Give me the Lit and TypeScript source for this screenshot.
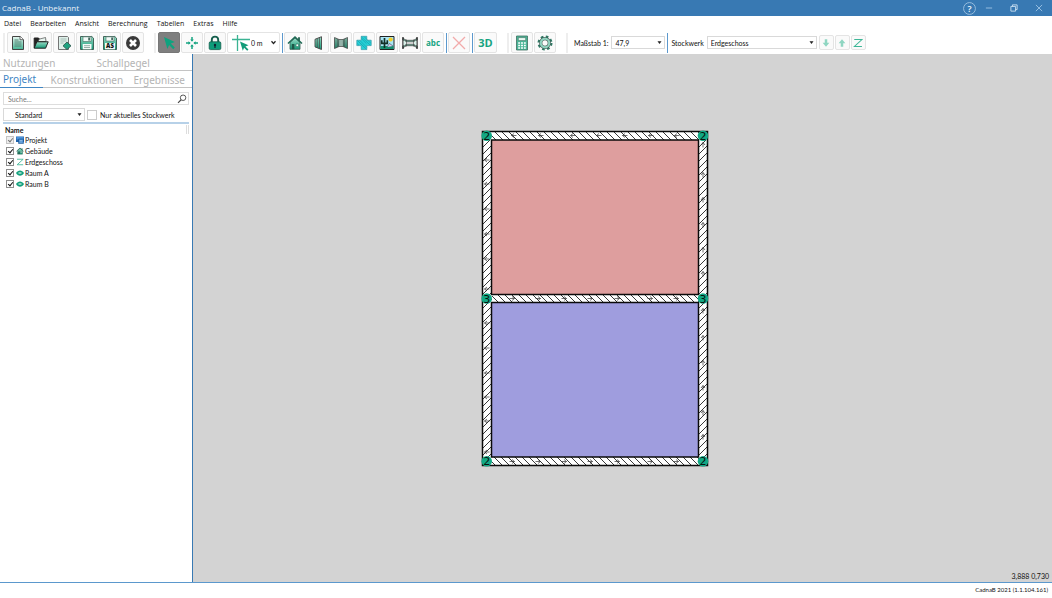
import { LitElement, html, css, svg, nothing } from "lit";
import { customElement, property, state } from "lit/decorators.js";
import { classMap } from "lit/directives/class-map.js";

const defs = svg`
  <linearGradient id="g" x1="0" y1="0" x2="0" y2="1">
    <stop offset="0" stop-color="#e6f7f1"></stop><stop offset="1" stop-color="#45b594"></stop>
  </linearGradient>
  <linearGradient id="d" x1="0" y1="0" x2="0" y2="1">
    <stop offset="0" stop-color="#9adcc6"></stop><stop offset="1" stop-color="#169a78"></stop>
  </linearGradient>`;

const icons: Record<string, unknown> = {
  file: svg`<path d="M2.5 1.5h7.7l3.3 3.2v9.8h-11z" fill="url(#g)" stroke="#444"/><path d="M10 1.5v3.2h3.4" fill="#fff" stroke="#444" stroke-width=".8"/><path d="M4.5 5h4M4.5 7h7M4.5 9h7M4.5 11h7" stroke="#4c7a6c" stroke-width=".9"/>`,
  open: svg`<path d="M1.2 13V3h4.3l1.2 1.5h5.6V7" fill="#222" stroke="#222"/><path d="M6 4.2 12.5 2.5l.6 4H5z" fill="#e8f5f0" stroke="#333" stroke-width=".6"/><path d="M1.2 13.2 3.8 6.8h11.4l-2.6 6.4z" fill="url(#d)" stroke="#222"/>`,
  fileDb: svg`<path d="M2.5 1.5h9l1 1v12h-10z" fill="#dff0ea" stroke="#666" stroke-width=".9"/><path d="M4.5 4h6M4.5 6h6M4.5 8h3" stroke="#8aa89e" stroke-width=".7"/><path d="M11 7l4 3.8-4 3.8-4-3.8z" fill="#1ea380" stroke="#2b4f45" stroke-width=".8"/>`,
  save: svg`<path d="M1.5 1.5h11.3l1.7 1.7v11.3h-13z" fill="url(#d)" stroke="#33584d" stroke-width=".9"/><path d="M4 1.8h8v4.7H4z" fill="#f2fbf8" stroke="#476b60" stroke-width=".6"/><path d="M9.3 2.5h1.6v3H9.3z" fill="#33584d"/><path d="M3.7 9h8.8v5.3H3.7z" fill="#f4faf8"/><path d="M5 10.7h6M5 12.5h6" stroke="#6b8f84" stroke-width=".7"/>`,
  saveAs: svg`<path d="M1.5 1.5h11.3l1.7 1.7v11.3h-13z" fill="url(#d)" stroke="#33584d" stroke-width=".9"/><path d="M4 1.8h8v4.2H4z" fill="#f2fbf8" stroke="#476b60" stroke-width=".6"/><path d="M9.3 2.5h1.6v2.6H9.3z" fill="#33584d"/><path d="M3 8h10v6.3H3z" fill="#f4faf8"/><text x="8" y="13.4" text-anchor="middle" font-size="6" font-weight="800" fill="#111">AS</text>`,
  close: svg`<circle cx="8" cy="8" r="7" fill="#3a3a3a"/><path d="m5 5 6 6m0-6-6 6" stroke="#fff" stroke-width="2.6"/><circle cx="8" cy="8" r="1" fill="#fff"/>`,
  cursor: svg`<path d="m3 2 10.8 4.9-4 1.6 4 4-1.6 1.7-4.1-4.1-1.7 4z" fill="#0fa37f"/>`,
  cross: svg`<path d="M8 2v3.8M8 10.2V14M2 8h3.8M10.2 8H14" stroke="#16a481" stroke-width="1.5"/><path d="M6.2 4.4h3.6L8 6.7zM6.2 11.6h3.6L8 9.3zM4.4 6.2v3.6L6.7 8zM11.6 6.2v3.6L9.3 8z" fill="#16a481"/>`,
  lock: svg`<path d="M4.8 7.2V4.8a3.2 3.2 0 0 1 6.4 0v2.4" fill="none" stroke="#145e4c" stroke-width="1.9"/><rect x="2.2" y="6.8" width="11.6" height="7.8" rx="1.3" fill="#0f9b79" stroke="#145e4c" stroke-width=".8"/><circle cx="8" cy="10" r="1.2" fill="#123"/><path d="M8 10v3" stroke="#123" stroke-width="1.2"/>`,
  house: svg`<path d="M11 2.3h2v4h-2z" fill="#36705f"/><path d="M3 7.5 8 3l5 4.5v6.8H3z" fill="url(#d)" stroke="#345c50" stroke-width=".8"/><path d="m1 8.5 7-6.5 7 6.5" fill="none" stroke="#1f6a55" stroke-width="1.6"/><path d="M4.8 9h2.6v5.2H4.8z" fill="#1d5747"/><path d="M9 9h2.6v2.6H9z" fill="#fff" stroke="#287a63" stroke-width=".7"/>`,
  wall: svg`<path d="m5 4.3 6.5-2.6v12.8L5 11.9z" fill="url(#d)" stroke="#444" stroke-width=".9"/><path d="M7.2 3.5v9.4M9.4 2.7v11" stroke="#444" stroke-width=".8"/>`,
  walls: svg`<path d="m1.5 2.5 4.5 2v7l-4.5 2zM14.5 2.5l-4.5 2v7l4.5 2z" fill="url(#d)" stroke="#444" stroke-width=".8"/><path d="M6 4.5h4v7H6z" fill="#b8e3d6" stroke="#444" stroke-width=".7"/><path d="M3 3.2v9.6M4.5 4v8M8 4.5v7M11.5 4v8M13 3.2v9.6" stroke="#444" stroke-width=".6"/>`,
  plus: svg`<path d="M5.2 1.3h5.6v3.9h4.4v5.4h-4.4v4H5.2v-4H.8V5.2h4.4z" fill="#27d0d6" stroke="#379aa8" stroke-width=".7"/><path d="m5.3 3.5 5.2 5.2m-9-3.2 3.8 3.8 5.2 5M3.8 5.4l7 7M5.3 1.8l9 8.4M8.3 1.8l6.4 6.4M1.2 8.5l1.8 1.8" stroke="#109ba8" stroke-width=".6"/>`,
  picture: svg`<path d="M1 1.5h14v13H1z" fill="#a9e6f5" stroke="#222"/><path d="M1.5 11h13v3H1.5z" fill="#158f70"/><circle cx="11.6" cy="4.5" r="2.1" fill="#f5cf22"/><path d="M5.5 13V3M2.8 5.3v3h5.5v-3" fill="none" stroke="#132f27" stroke-width="1.7"/><path d="m8 12 2.5-3.5L14 11" fill="#dce" stroke="#345" stroke-width=".6"/>`,
  room: svg`<path d="M.8 3 4 5.3h8L15.2 3v2L12 6.8H4L.8 5zM.8 13 4 10.7h8l3.2 2.3v-2L12 9.2H4L.8 11z" fill="#7fcdb5" stroke="#333" stroke-width=".7"/><path d="M1 2v12M15 2v12" stroke="#333" stroke-width="1.4"/><path d="M4 4.5v7M12 4.5v7" stroke="#333"/><path d="M1.6 5.5 4 6.8v2.4l-2.4 1.3zM14.4 5.5 12 6.8v2.4l2.4 1.3z" fill="#d8f1e9"/>`,
  del: svg`<path d="m2 2 12 12M14 2 2 14" stroke="#f2aaaa" stroke-width="1.3"/>`,
  calc: svg`<path d="M2.5 1h11v14h-11z" fill="#4bb798" stroke="#3c6f60" stroke-width=".8"/><path d="M4.3 2.6h7.4v3H4.3z" fill="#e8f8f2" stroke="#3c6f60" stroke-width=".6"/><path d="M4.2 7.9h7.6M4.2 10.4h7.6M4.2 12.9h7.6" stroke="#fff" stroke-width="1.5" stroke-dasharray="1.9 .95"/>`,
  gear: svg`<circle cx="8" cy="8" r="6.3" fill="none" stroke="#2f7864" stroke-width="2.4" stroke-dasharray="2.6 2.35"/><circle cx="8" cy="8" r="4.3" fill="none" stroke="#3c4f4a" stroke-width="3.2"/><circle cx="8" cy="8" r="4.3" fill="none" stroke="#8fd3bf" stroke-width="2.2"/>`,
  down: svg`<path d="M6 2h4v5.5h3.4L8 14 2.600 7.500H6z" fill="#8fd6c2"/>`,
  up: svg`<path d="M6 14h4V8.500h3.400L8 2 2.600 8.500H6z" fill="#8fd6c2"/>`,
  level: svg`<path d="M2 2.500h12.300L2.300 13.500h12" fill="none" stroke="#3db696" stroke-width="1.700"/>`,
  search: svg`<circle cx="9.700" cy="6" r="4.400" fill="none" stroke="#444" stroke-width="1.400"/><path d="m6.600 9.200-5 5" stroke="#444" stroke-width="1.700"/>`,
  project: svg`<path d="M0 1h16v11H0z" fill="#1d63ae"/><path d="M1 2h14v5H1z" fill="#4b93da"/><path d="M5 6h10v9H5z" fill="#3f86cc" stroke="#164a84"/><path d="M7 9h6M7 12h6" stroke="#dcebf9"/>`,
  roomDot: svg`<path d="M0 8c4-7 12-7 16 0-4 7-12 7-16 0z" fill="#12a07c"/><path d="M5 8h6" stroke="#d9f4ec" stroke-width="2.400"/>`,
  help: svg`<circle cx="8" cy="8" r="7.300" fill="none" stroke="#aacae6"/><text x="8" y="12" text-anchor="middle" font-size="11" font-weight="600" fill="#fff">?</text>`,
  min: svg`<path d="M3 8h10" stroke="#a9cbea" stroke-width="1.300"/>`,
  restore: svg`<path d="M3 5.500h7.500V13H3zM5.500 5.500V3H13v7.500h-2.500" fill="none" stroke="#cfe2f3" stroke-width="1.400"/>`,
  exit: svg`<path d="m3 3 10 10M13 3 3 13" stroke="#a9cbea" stroke-width="1.300"/>`,
};

@customElement("app-icon")
class AppIcon extends LitElement {
  static styles = css`
    :host { display: inline-flex; flex: none; width: 16px; height: 16px; }
    svg { width: 100%; height: 100%; display: block; font-family: "Open Sans", sans-serif; }
  `;
  @property() name = "";
  render() {
    return html`<svg viewBox="0 0 16 16" aria-hidden="true"><defs>${defs}</defs>${icons[this.name] ?? nothing}</svg>`;
  }
}

type Wall = { x: number; y: number; w: number; h: number; marks: number[]; dir: string };

const walls: Wall[] = [
  { x: 2, y: 2, w: 226, h: 9, dir: "l", marks: [34, 61, 93, 119, 145, 171, 197] },
  { x: 2, y: 328, w: 226, h: 9, dir: "r", marks: [32, 58, 84, 110, 137, 170, 196] },
  { x: 2, y: 11, w: 10, h: 317, dir: "l", marks: [31, 55, 80, 105, 130, 160, 194, 219, 244, 268, 292, 323] },
  { x: 218, y: 11, w: 10, h: 317, dir: "u", marks: [16, 46, 71, 96, 121, 145, 182, 209, 234, 259, 284, 308] },
  { x: 12, y: 165, w: 206, h: 9, dir: "r", marks: [32, 58, 84, 110, 137, 170, 196] },
];

const turn: Record<string, number> = { r: 0, l: 180, u: 270 };

@customElement("floor-plan")
class FloorPlan extends LitElement {
  static styles = css`
    :host { display: block; }
    svg { display: block; width: 230px; height: 340px; font-family: "DejaVu Sans", sans-serif; }
    .edge { fill: none; stroke: #0a0a0a; stroke-width: 1.5; }
    .hatch { stroke: #222; stroke-width: 0.9; }
    .mark { stroke: #333; stroke-width: 0.7; fill: none; }
    .node { fill: #12a884; }
    .count { font-size: 11px; text-anchor: middle; fill: #06140f; }
  `;
  private wall(w: Wall, i: number) {
    const flat = w.w > w.h;
    const lines = [];
    if (flat) {
      for (let x = w.x - 9; x < w.x + w.w; x += 7) {
        lines.push(svg`<line class="hatch" x1=${x} y1=${w.y} x2=${x + w.h} y2=${w.y + w.h}></line>`);
      }
    } else {
      for (let y = w.y - 9; y < w.y + w.h + 10; y += 7) {
        lines.push(svg`<line class="hatch" x1=${w.x} y1=${y + w.w} x2=${w.x + w.w} y2=${y}></line>`);
      }
    }
    return svg`
      <clipPath id=${"w" + i}><rect x=${w.x} y=${w.y} width=${w.w} height=${w.h}></rect></clipPath>
      <rect x=${w.x} y=${w.y} width=${w.w} height=${w.h} fill="#fff"></rect>
      <g clip-path=${`url(#w${i})`}>${lines}</g>
      ${w.marks.map((m) => {
        const cx = flat ? m : w.x + w.w / 2;
        const cy = flat ? w.y + w.h / 2 : m;
        return svg`<path class="mark" d="M-2.5 0h5M0-2 2.5 0 0 2" transform=${`translate(${cx} ${cy}) rotate(${turn[w.dir]})`}></path>`;
      })}`;
  }
  render() {
    const nodes: [number, number, number][] = [
      [6.7, 6.7, 2], [223, 6.7, 2], [6.7, 169.5, 3], [223, 169.5, 3], [6.7, 332.3, 2], [223, 332.3, 2],
    ];
    return html`<svg viewBox="0 0 230 340" role="img" aria-label="Grundriss Erdgeschoss">
      <rect x="12" y="11" width="206" height="154" fill="#de9e9e"></rect>
      <rect x="12" y="174" width="206" height="154" fill="#9f9dde"></rect>
      ${walls.map((w, i) => this.wall(w, i))}
      <rect class="edge" x="2.5" y="2.5" width="225" height="334"></rect>
      <rect class="edge" x="11.5" y="11" width="207" height="154.5"></rect>
      <rect class="edge" x="11.5" y="173.5" width="207" height="154.5"></rect>
      ${nodes.map(([x, y, n]) => svg`<circle class="node" cx=${x} cy=${y} r="5.300"></circle><text class="count" x=${x} y=${y + 4}>${n}</text>`)}
    </svg>`;
  }
}

@customElement("app-root")
class AppRoot extends LitElement {
  static styles = css`
    :host {
      display: flex; flex-direction: column; height: 100vh; overflow: hidden;
      background: #fff; color: #111; font: 7px/10px Lato, "Open Sans", sans-serif;
    }
    *, *::before, *::after { box-sizing: border-box; }
    button, input, select { font: inherit; color: inherit; margin: 0; padding: 0; }
    button { display: inline-flex; align-items: center; justify-content: center; border: 0; background: none; }
    .titlebar { display: flex; align-items: center; height: 16px; flex: none; background: #3879b3; color: #e8f1f9; padding: 0 7px 0 2px; }
    .title { flex: 1; margin: 0; font: 8px/14px "Open Sans", sans-serif; }
    .window { display: flex; gap: 13px; align-items: center; }
    .window app-icon { width: 10px; height: 10px; }
    .titlebar button { width: 12px; height: 14px; }
    .help { margin-right: 8px; }
    .help app-icon { width: 13px; height: 13px; }
    .menu { display: flex; gap: 9px; height: 15px; flex: none; align-items: center; padding: 0 4px; font-family: "Open Sans", sans-serif; }
    .menu a { color: inherit; text-decoration: none; }
    .tools { display: flex; align-items: center; height: 23px; flex: none; padding-left: 3px; }
    .group { display: flex; align-items: center; gap: 1px; }
    .group + .group { margin-left: 10px; }
    .grip { width: 2px; height: 20px; background: #eee; margin-right: 1px; }
    .rule { width: 1px; height: 20px; background: #5b98cd; margin-left: 1px; }
    .tool { width: 22px; height: 21px; border: 1px solid #e4e4e4; border-radius: 2px; background: #fafafa; }
    .tool.active { background: #7f7f7f; border-color: #777; }
    .tool.word { color: #17a481; font: 700 8px/10px "Open Sans", sans-serif; }
    .tool.word.big { font-size: 11px; width: 23px; }
    .tool.small { width: 15px; height: 15px; }
    .tool.small app-icon { width: 10px; height: 10px; }
    .snap { display: flex; align-items: center; width: 53px; height: 21px; border: 1px solid #e4e4e4; border-radius: 2px; padding-left: 3px; }
    .snap svg { width: 20px; height: 18px; flex: none; }
    .snap .pick { flex: 1; }
    .snap .pick select { border: 0; padding: 0; background: none; }
    .pick { position: relative; display: block; }
    .pick select { appearance: none; width: 100%; height: 13px; border: 1px solid #d9d9d9; border-radius: 0; background: #fff; padding: 0 10px 0 3px; }
    .pick .caret { position: absolute; right: 3px; top: 4px; width: 5px; height: 5px; pointer-events: none; }
    .field { display: flex; align-items: center; gap: 3px; }
    .scales { margin-left: 4px; }
    .scale { width: 54px; }
    .floors { margin: 0 1px 0 2px; }
    .floor { width: 110px; }
    .body { display: grid; grid-template-columns: 193px 1fr; flex: 1; min-height: 0; border-bottom: 1px solid #5b98cd; }
    .side { border-right: 1px solid #3879b3; }
    .tabs { display: flex; height: 17px; border-bottom: 1px solid #c4c4c4; }
    .tabs button { height: 17px; padding: 0 3px; font: 10px/14px "Noto Sans", sans-serif; color: #b4b4b4; }
    .tabs.upper { gap: 35px; }
    .tabs .on { color: #3f86c4; border-bottom: 1px solid #3f86c4; padding-right: 7px; }
    .tabs.lower { justify-content: space-between; padding-right: 4px; }
    .find { display: flex; align-items: center; height: 13px; margin: 4px 3px 3px; border: 1px solid #ddd; padding: 0 1px 0 4px; }
    .find input { flex: 1; min-width: 0; border: 0; outline: 0; background: none; }
    .find input::placeholder { color: #777; opacity: 1; }
    .find app-icon { width: 10px; height: 10px; }
    .filter { display: flex; align-items: center; padding: 0 3px 1px; gap: 2px; }
    .filter .pick { width: 82px; }
    .filter .pick select { padding-left: 11px; }
    .filter label { display: flex; align-items: center; gap: 3px; }
    .head { display: flex; justify-content: space-between; height: 12px; margin: 0 3px; padding: 1px 0 0 2px; border-top: 2px solid #b7d1e8; font-weight: 700; }
    .head::after { content: ""; width: 3px; border: solid #ddd; border-width: 0 1px; }
    .tree { list-style: none; margin: 0; padding: 0 6px; }
    .tree label { display: flex; align-items: center; gap: 1px; height: 11px; }
    .tree app-icon { width: 8px; height: 8px; margin-left: 1px; }
    input[type="checkbox"] { appearance: none; position: relative; width: 8px; height: 8px; border: 1px solid #8e8e8e; background: #fff; }
    input[type="checkbox"]:checked::after { content: ""; position: absolute; left: 2px; top: 0; width: 3px; height: 5px; border: solid #111; border-width: 0 1px 1px 0; transform: rotate(40deg); }
    input[type="checkbox"]:disabled { border-color: #c4c4c4; background: #eee; }
    input[type="checkbox"]:disabled::after { border-color: #777; }
    .filter input[type="checkbox"] { width: 10px; height: 10px; border-color: #ccc; }
    .canvas { position: relative; background: #d3d3d3; overflow: hidden; }
    .plan { position: absolute; left: 287px; top: 75px; }
    .coords { position: absolute; right: 3px; bottom: 1px; font-size: 7px; }
    .status { height: 15px; flex: none; text-align: right; padding: 2px 4px 0 0; font-size: 6px; }
  `;

  @state() private tool = "cursor";
  @state() private tab = "Projekt";

  private btn(name: string, label: string) {
    return html`<button class="tool" title=${label} aria-label=${label}><app-icon name=${name}></app-icon></button>`;
  }
  private mode(name: string, label: string) {
    return html`<button class=${classMap({ tool: true, active: this.tool === name })} title=${label} aria-label=${label}
      @click=${() => (this.tool = name)}><app-icon name=${name}></app-icon></button>`;
  }
  private tabBtn(name: string) {
    return html`<button role="tab" aria-selected=${this.tab === name} class=${classMap({ on: this.tab === name })}
      @click=${() => (this.tab = name)}>${name}</button>`;
  }
  private pick(cls: string, id: string, label: string, value: string, open = false) {
    return html`<span class="pick ${cls}"><select id=${id} aria-label=${label}><option>${value}</option></select>
      <svg class="caret" viewBox="0 0 10 10" aria-hidden="true">${open
        ? svg`<path d="m1 2.5 4 4.5 4-4.5" fill="none" stroke="#222" stroke-width="2.4"></path>`
        : svg`<path d="M1 2.5h8L5 8z" fill="#222"></path>`}</svg></span>`;
  }

  render() {
    const tree: [string, string, boolean][] = [
      ["project", "Projekt", true], ["house", "Gebäude", false], ["level", "Erdgeschoss", false],
      ["roomDot", "Raum A", false], ["roomDot", "Raum B", false],
    ];
    return html`
      <header class="titlebar">
        <h1 class="title">CadnaB - Unbekannt</h1>
        <button class="help" aria-label="Hilfe"><app-icon name="help"></app-icon></button>
        <div class="window">
          <button aria-label="Minimieren"><app-icon name="min"></app-icon></button>
          <button aria-label="Wiederherstellen"><app-icon name="restore"></app-icon></button>
          <button aria-label="Beenden"><app-icon name="exit"></app-icon></button>
        </div>
      </header>
      <nav class="menu">
        ${["Datei", "Bearbeiten", "Ansicht", "Berechnung", "Tabellen", "Extras", "Hilfe"].map((m) => html`<a href="#">${m}</a>`)}
      </nav>
      <div class="tools" role="toolbar">
        <div class="group">
          <span class="grip"></span>
          ${this.btn("file", "Neu")}${this.btn("open", "Öffnen")}${this.btn("fileDb", "Importieren")}
          ${this.btn("save", "Speichern")}${this.btn("saveAs", "Speichern unter")}${this.btn("close", "Schließen")}
        </div>
        <div class="group">
          <span class="grip"></span>
          ${this.mode("cursor", "Auswahl")}${this.mode("cross", "Verschieben")}${this.mode("lock", "Sperren")}
          <div class="snap">
            <svg viewBox="0 0 20 18" aria-hidden="true"><path d="M1 5.5h18M6.5 1v16" stroke="#3bb393" stroke-width="1.3"></path><path d="m9 7.5 8.5 3.7-3.1 1.2 3.1 3.1-1.3 1.3-3.1-3.1-1.3 3z" fill="#129c79"></path></svg>
            ${this.pick("", "snap", "Fangraster", "0 m", true)}
          </div>
          <span class="rule"></span>
          ${this.btn("house", "Gebäude")}${this.btn("wall", "Wand")}${this.btn("walls", "Wände")}
          ${this.btn("plus", "Hinzufügen")}${this.btn("picture", "Bild")}${this.btn("room", "Raum")}
          <button class="tool word">abc</button>
          <span class="rule"></span>
          ${this.btn("del", "Löschen")}
          <span class="rule"></span>
          <button class="tool word big">3D</button>
        </div>
        <div class="group">
          <span class="grip"></span>
          ${this.btn("calc", "Berechnen")}${this.btn("gear", "Einstellungen")}
        </div>
        <div class="group">
          <span class="grip"></span>
          <div class="field scales"><label for="scale">Maßstab 1:</label>${this.pick("scale", "scale", "Maßstab", "47,9")}</div>
          <span class="rule"></span>
          <div class="field floors"><label for="floor">Stockwerk</label>${this.pick("floor", "floor", "Stockwerk", "Erdgeschoss")}</div>
          <button class="tool small" aria-label="Stockwerk tiefer"><app-icon name="down"></app-icon></button>
          <button class="tool small" aria-label="Stockwerk höher"><app-icon name="up"></app-icon></button>
          <button class="tool small" aria-label="Stockwerke"><app-icon name="level"></app-icon></button>
        </div>
      </div>
      <main class="body">
        <aside class="side">
          <div class="tabs upper" role="tablist">${["Nutzungen", "Schallpegel"].map((t) => this.tabBtn(t))}</div>
          <div class="tabs lower" role="tablist">${["Projekt", "Konstruktionen", "Ergebnisse"].map((t) => this.tabBtn(t))}</div>
          <div class="find"><input type="text" placeholder="Suche..." aria-label="Suche" /><app-icon name="search"></app-icon></div>
          <div class="filter">
            ${this.pick("", "view", "Ansicht", "Standard")}
            <label><input type="checkbox" />Nur aktuelles Stockwerk</label>
          </div>
          <div class="head">Name</div>
          <ul class="tree">
            ${tree.map(([icon, name, off]) => html`<li><label><input type="checkbox" checked ?disabled=${off} /><app-icon name=${icon}></app-icon>${name}</label></li>`)}
          </ul>
        </aside>
        <section class="canvas">
          <floor-plan class="plan"></floor-plan>
          <span class="coords">3,888 0,730</span>
        </section>
      </main>
      <footer class="status">CadnaB 2021 (1.1.104.161)</footer>`;
  }
}
